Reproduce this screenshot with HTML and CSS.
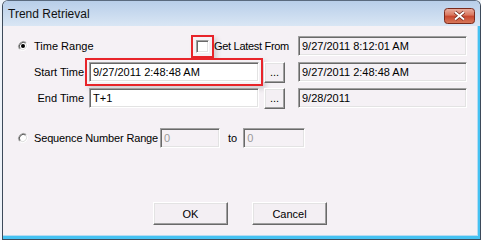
FILE: index.html
```html
<!DOCTYPE html>
<html lang="en">
<head>
    <meta charset="UTF-8">
    <title>Trend Retrieval</title>
    <link rel="stylesheet" href="styles.css">
</head>
<body>

<div class="window">
    <!-- Barra de titulo -->
    <div class="titlebar">
        <span class="title">Trend Retrieval</span>
        <span class="close">
            <svg width="31" height="16" viewBox="0 0 31 16">
                <defs>
                    <linearGradient id="cg" x1="0" y1="0" x2="0" y2="1">
                        <stop offset="0" stop-color="#eab1a3"/>
                        <stop offset="0.45" stop-color="#d9755d"/>
                        <stop offset="0.5" stop-color="#c7452d"/>
                        <stop offset="1" stop-color="#d97a5c"/>
                    </linearGradient>
                </defs>
                <rect x="0.5" y="0.5" width="30" height="15" rx="3" fill="url(#cg)" stroke="#7a2a1c"/>
                <path d="M11 4 L20 11.5 M20 4 L11 11.5" stroke="#6a2418" stroke-width="3.4"/>
                <path d="M11 4 L20 11.5 M20 4 L11 11.5" stroke="#fff" stroke-width="2"/>
            </svg>
        </span>
    </div>

    <div class="frame">
        <div class="client">

            <div class="row row-opt">
                <label class="radio">
                    <svg class="radio-ico" width="12" height="12" viewBox="0 0 12 12">
                        <circle cx="6" cy="6" r="4.5" fill="#fff"/>
                        <path d="M2.5 9.5 A5 5 0 0 1 9.5 2.5" fill="none" stroke="#a0a0a0"/>
                        <path d="M9.5 2.5 A5 5 0 0 1 2.5 9.5" fill="none" stroke="#fff"/>
                        <path d="M3.2 8.8 A4 4 0 0 1 8.8 3.2" fill="none" stroke="#555"/>
                        <path d="M8.8 3.2 A4 4 0 0 1 3.2 8.8" fill="none" stroke="#dcdcdc"/>
                        <circle cx="6" cy="6" r="2" fill="#000"/>
                    </svg>
                    Time Range
                </label>
                <label class="check">
                    <span class="box hl-box"></span>
                    Get Latest From
                </label>
                <span class="field ro">9/27/2011 8:12:01 AM</span>
            </div>

            <div class="row">
                <span class="lbl">Start Time</span>
                <span class="field edit hl">9/27/2011 2:48:48 AM</span>
                <button class="dots">...</button>
                <span class="field ro">9/27/2011 2:48:48 AM</span>
            </div>

            <div class="row">
                <span class="lbl">End Time</span>
                <span class="field edit">T+1</span>
                <button class="dots">...</button>
                <span class="field ro">9/28/2011</span>
            </div>

            <div class="row row-opt seq">
                <label class="radio">
                    <svg class="radio-ico" width="12" height="12" viewBox="0 0 12 12">
                        <circle cx="6" cy="6" r="4.5" fill="#fff"/>
                        <path d="M2.5 9.5 A5 5 0 0 1 9.5 2.5" fill="none" stroke="#a0a0a0"/>
                        <path d="M9.5 2.5 A5 5 0 0 1 2.5 9.5" fill="none" stroke="#fff"/>
                        <path d="M3.2 8.8 A4 4 0 0 1 8.8 3.2" fill="none" stroke="#555"/>
                        <path d="M8.8 3.2 A4 4 0 0 1 3.2 8.8" fill="none" stroke="#dcdcdc"/>
                    </svg>
                    Sequence Number Range
                </label>
                <span class="field dis seq-from">0</span>
                <span class="to">to</span>
                <span class="field dis seq-to">0</span>
            </div>

            <div class="actions">
                <button class="btn">OK</button>
                <button class="btn">Cancel</button>
            </div>

        </div>
    </div>
</div>

</body>
</html>
```

FILE: styles.css
```css
body {
    margin: 0;
    background: #eef3f9;
    font-family: "Liberation Sans", Arial, sans-serif;
    font-size: 11px;
    color: #000;
}

.window {
    margin-left: 2px;
    width: 477px;
    height: 238px;
    border: 1px solid #3d4a5a;
    border-top-color: #5a6a7e;
    border-radius: 6px 6px 0 0;
    overflow: hidden;
}

/* Barra de titulo */
.titlebar {
    height: 25px;
    display: flex;
    align-items: flex-start;
    background: linear-gradient(#b8cee9, #d9e6f4);
}
.titlebar .title {
    font-size: 12px;
    color: #111;
    padding-left: 5px;
    margin-top: 6px;
}
.titlebar .close {
    margin-left: auto;
    margin-right: 5px;
    margin-top: 7px;
    height: 16px;
}
.titlebar svg {
    display: block;
}

.frame {
    height: 211px;
    padding: 0 2px 2px 0;
    background: #45c2f2;
}

.client {
    height: 210px;
    background: #f5f1f5;
    border-right: 1px solid #b6dcf2;
    border-bottom: 1px solid #b6dcf2;
    padding-top: 10px;
    padding-right: 10px;
    box-sizing: border-box;
}

.row {
    display: flex;
    align-items: center;
    height: 20px;
    margin-bottom: 6px;
}

.row-opt {
    padding-left: 14px;
}

.radio {
    display: flex;
    align-items: center;
    width: 179px;
    flex: none;
}
.radio-ico {
    margin-right: 5px;
    flex: none;
}

.check {
    display: flex;
    align-items: center;
    letter-spacing: -0.3px;
}

.box {
    width: 13px;
    height: 13px;
    box-sizing: border-box;
    margin-right: 5px;
    background: #fff;
    border: 1px solid;
    border-color: #a0a0a0 #fff #fff #a0a0a0;
}
.hl-box {
    box-shadow: inset 1px 1px 0 #696969, inset -1px -1px 0 #e3e3e3,
                0 0 0 3px #f5f1f5, 0 0 0 5px #e8242a,
                3px 3px 5px 5px rgba(0, 0, 0, 0.15);
}

.lbl {
    width: 81px;
    margin-right: 5px;
    text-align: right;
    flex: none;
}

.field {
    box-sizing: border-box;
    height: 20px;
    line-height: 18px;
    padding: 0 3px;
    border: 1px solid;
    border-color: #a0a0a0 #fff #fff #a0a0a0;
    box-shadow: inset 1px 1px 0 #696969, inset -1px -1px 0 #e3e3e3;
    white-space: nowrap;
    flex: none;
}
.field.edit {
    width: 170px;
    background: #fff;
}
.field.ro {
    width: 169px;
    margin-left: auto;
}
.field.dis {
    color: #9a9a9a;
}
.field.hl {
    box-shadow: inset 1px 1px 0 #696969, inset -1px -1px 0 #e3e3e3,
                0 0 0 2px #f5f1f5, 0 0 0 4px #e8242a,
                3px 3px 5px 4px rgba(0, 0, 0, 0.15);
}

.dots, .btn {
    font: inherit;
    color: #000;
    background: #f3eff3;
    border: 1px solid;
    border-color: #fff #696969 #696969 #fff;
    box-shadow: inset -1px -1px 0 #a0a0a0, inset 1px 1px 0 #e3e3e3;
    padding: 0;
    border-radius: 0;
}

.dots {
    width: 21px;
    height: 21px;
    margin-left: 5px;
    line-height: 19px;
    flex: none;
}

.seq {
    margin-top: 20px;
}
.seq .radio {
    width: auto;
    margin-right: 2px;
    letter-spacing: -0.15px;
}
.seq-from {
    width: 60px;
}
.to {
    margin: 0 6px 0 8px;
}
.seq-to {
    width: 62px;
}

.actions {
    display: flex;
    justify-content: center;
    gap: 24px;
    margin-top: 54px;
    padding-left: 10px;
}
.btn {
    width: 75px;
    height: 23px;
}
```
